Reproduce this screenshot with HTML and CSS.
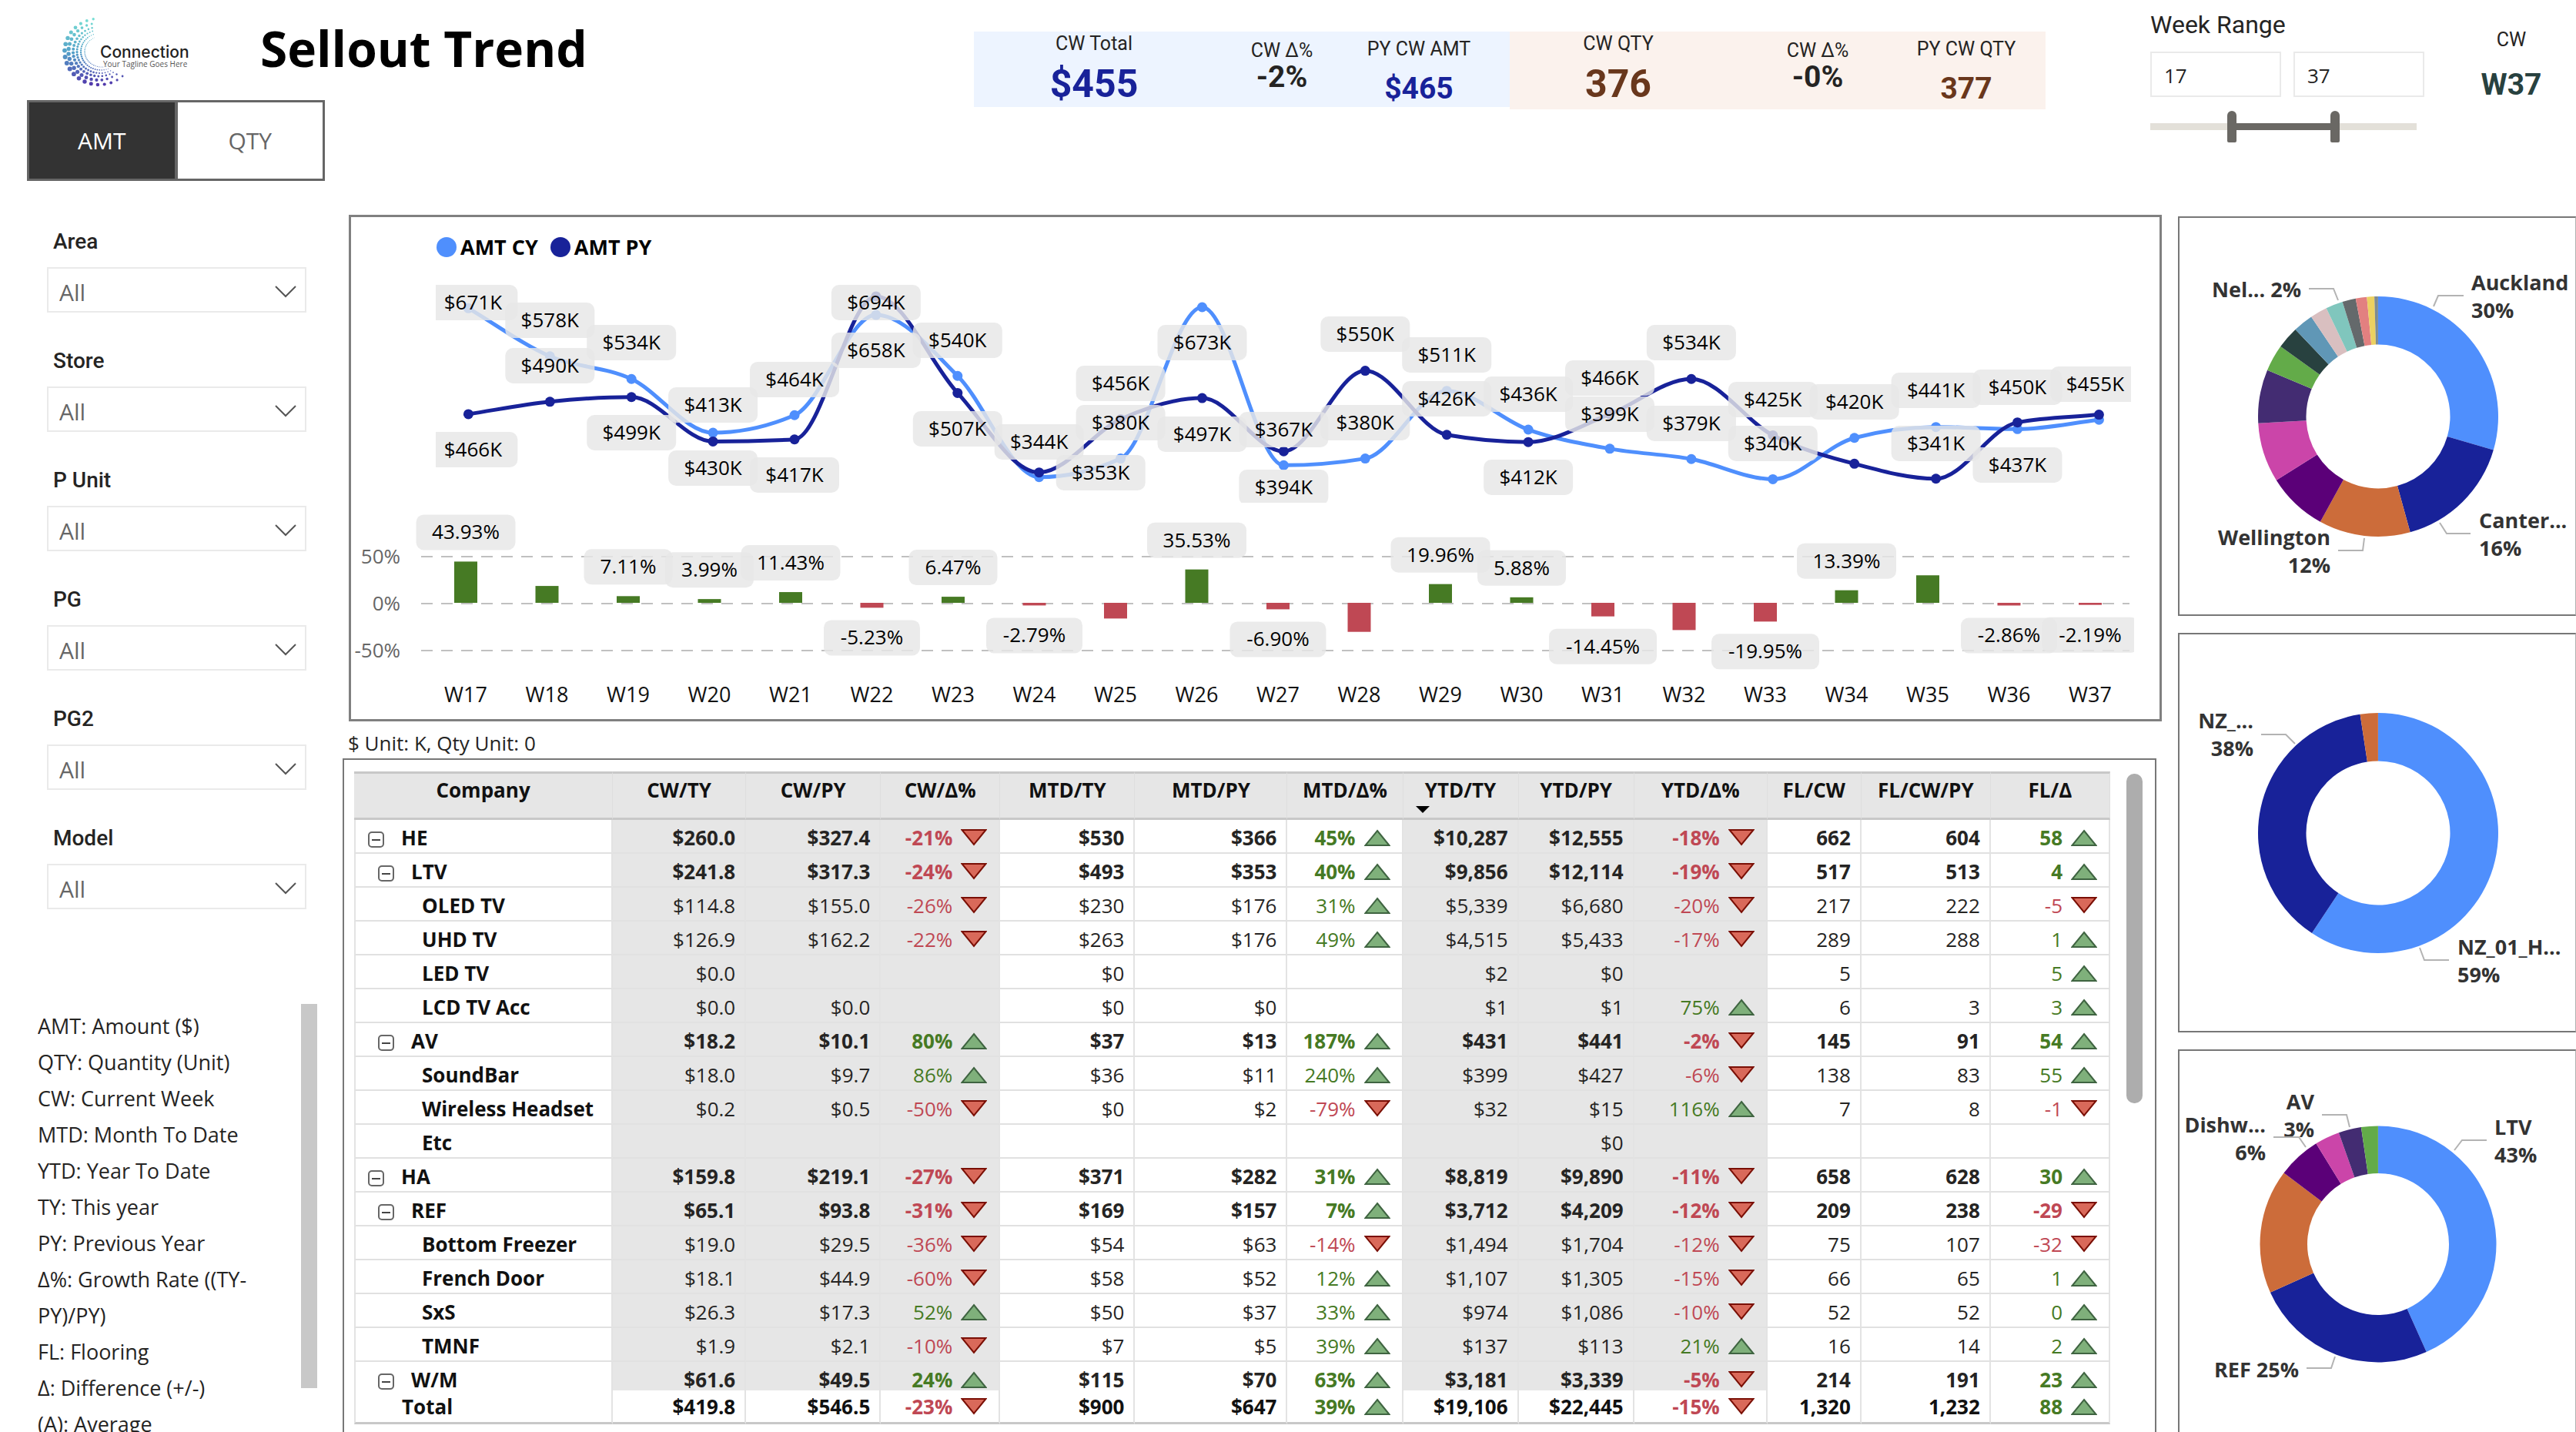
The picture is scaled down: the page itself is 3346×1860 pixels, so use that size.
FILE: index.html
```html
<!DOCTYPE html>
<html lang="en">
<head>
<meta charset="utf-8">
<title>Sellout Trend</title>
<link rel="stylesheet" href="styles.css">
</head>
<body>
<header class="top">
  <div class="brand">
    <div class="brand-row">
      <svg class="logo" viewBox="0 0 170 100" role="img" aria-label="Connection">
        <g id="logo-dots"></g>
        <text class="logo-name" x="52" y="52">Connection</text>
        <text class="logo-tag" x="56" y="64">Your Tagline Goes Here</text>
      </svg>
      <h1 class="title">Sellout Trend</h1>
    </div>
    <div class="toggle">
      <button class="toggle-btn is-on" type="button">AMT</button>
      <button class="toggle-btn" type="button">QTY</button>
    </div>
  </div>
  <section class="kpis">
    <div class="kpi-group kpi-amt">
      <div class="kpi kpi-main"><span class="kpi-label">CW Total</span><strong class="kpi-value">$455</strong></div>
      <div class="kpi kpi-delta"><span class="kpi-label">CW Δ%</span><strong class="kpi-value">-2%</strong></div>
      <div class="kpi kpi-prev"><span class="kpi-label">PY CW AMT</span><strong class="kpi-value">$465</strong></div>
    </div>
    <div class="kpi-group kpi-qty">
      <div class="kpi kpi-main"><span class="kpi-label">CW QTY</span><strong class="kpi-value">376</strong></div>
      <div class="kpi kpi-delta"><span class="kpi-label">CW Δ%</span><strong class="kpi-value">-0%</strong></div>
      <div class="kpi kpi-prev"><span class="kpi-label">PY CW QTY</span><strong class="kpi-value">377</strong></div>
    </div>
  </section>
  <section class="range">
    <h2 class="range-title">Week Range</h2>
    <div class="range-boxes">
      <input class="range-box" type="text" value="17" aria-label="First week">
      <input class="range-box" type="text" value="37" aria-label="Last week">
    </div>
    <div class="slider">
      <div class="slider-fill"></div>
      <input class="slider-input" type="range" min="2" max="52" value="17" aria-label="First week">
      <input class="slider-input" type="range" min="2" max="52" value="37" aria-label="Last week">
    </div>
  </section>
  <div class="week"><span class="week-label">CW</span><strong class="week-value">W37</strong></div>
</header>

<div class="content">
  <aside class="sidebar">
    <div class="filters">
      <div class="filter"><label class="filter-label" for="f-area">Area</label>
        <div class="filter-box"><select class="filter-select" id="f-area"><option>All</option></select><svg class="chevron" viewBox="0 0 28 16"><path d="M1 1l13 13L27 1"/></svg></div></div>
      <div class="filter"><label class="filter-label" for="f-store">Store</label>
        <div class="filter-box"><select class="filter-select" id="f-store"><option>All</option></select><svg class="chevron" viewBox="0 0 28 16"><path d="M1 1l13 13L27 1"/></svg></div></div>
      <div class="filter"><label class="filter-label" for="f-unit">P Unit</label>
        <div class="filter-box"><select class="filter-select" id="f-unit"><option>All</option></select><svg class="chevron" viewBox="0 0 28 16"><path d="M1 1l13 13L27 1"/></svg></div></div>
      <div class="filter"><label class="filter-label" for="f-pg">PG</label>
        <div class="filter-box"><select class="filter-select" id="f-pg"><option>All</option></select><svg class="chevron" viewBox="0 0 28 16"><path d="M1 1l13 13L27 1"/></svg></div></div>
      <div class="filter"><label class="filter-label" for="f-pg2">PG2</label>
        <div class="filter-box"><select class="filter-select" id="f-pg2"><option>All</option></select><svg class="chevron" viewBox="0 0 28 16"><path d="M1 1l13 13L27 1"/></svg></div></div>
      <div class="filter"><label class="filter-label" for="f-model">Model</label>
        <div class="filter-box"><select class="filter-select" id="f-model"><option>All</option></select><svg class="chevron" viewBox="0 0 28 16"><path d="M1 1l13 13L27 1"/></svg></div></div>
    </div>
    <div class="notes">
      <div class="notes-text">
        <p>AMT: Amount ($)</p>
        <p>QTY: Quantity (Unit)</p>
        <p>CW: Current Week</p>
        <p>MTD: Month To Date</p>
        <p>YTD: Year To Date</p>
        <p>TY: This year</p>
        <p>PY: Previous Year</p>
        <p>Δ%: Growth Rate ((TY-PY)/PY)</p>
        <p>FL: Flooring</p>
        <p>Δ: Difference (+/-)</p>
        <p>(A): Average</p>
      </div>
      <div class="notes-thumb"></div>
    </div>
  </aside>

  <main class="main">
    <section class="panel trend">
      <div class="legend">
        <span class="legend-item"><i class="dot dot-cy"></i>AMT CY</span>
        <span class="legend-item"><i class="dot dot-py"></i>AMT PY</span>
      </div>
      <svg class="trend-chart" id="trend" viewBox="0 0 2349 596" role="img" aria-label="Weekly amount, current and previous year"></svg>
    </section>
    <p class="unit">$ Unit: K, Qty Unit: 0</p>
    <section class="matrix">
      <table class="grid">
        <colgroup>
          <col class="c-name"><col class="c-173"><col class="c-175"><col class="c-155">
          <col class="c-175"><col class="c-198"><col class="c-150"><col class="c-150">
          <col class="c-150"><col class="c-173"><col class="c-122"><col class="c-168"><col class="c-155">
        </colgroup>
        <thead><tr>
          <th>Company</th><th>CW/TY</th><th>CW/PY</th><th>CW/Δ%</th><th>MTD/TY</th><th>MTD/PY</th><th>MTD/Δ%</th>
          <th class="sorted">YTD/TY<svg class="sort" viewBox="0 0 18 9"><path d="M0 0h18L9 9z"/></svg></th><th>YTD/PY</th><th>YTD/Δ%</th><th>FL/CW</th><th>FL/CW/PY</th><th>FL/Δ</th>
        </tr></thead>
        <tbody id="rows"></tbody>
      </table>
      <div class="matrix-thumb"></div>
    </section>
  </main>

  <aside class="donuts">
    <section class="panel donut"><svg id="donut-area" class="donut-chart" viewBox="0 0 514 515" role="img" aria-label="Share by area"></svg></section>
    <section class="panel donut"><svg id="donut-store" class="donut-chart" viewBox="0 0 514 515" role="img" aria-label="Share by store"></svg></section>
    <section class="panel donut"><svg id="donut-product" class="donut-chart" viewBox="0 0 514 515" role="img" aria-label="Share by product group"></svg></section>
  </aside>
</div>
<script src="app.js"></script>
</body>
</html>
```
FILE: styles.css
```css
* { box-sizing: border-box; }

body {
  margin: 0;
  height: 100vh;
  overflow: hidden;
  display: flex;
  flex-direction: column;
  background: #fff;
  color: #252423;
  font-family: "Open Sans", "Noto Sans", sans-serif;
  font-size: 26px;
}

h1, h2, p { margin: 0; }
button, input, select { font: inherit; color: inherit; }

/* header */
.top { display: flex; align-items: flex-start; height: 279px; flex: none; }
.brand { flex: 1; }
.brand-row { display: flex; align-items: center; height: 130px; padding: 0 0 4px 78px; }
.logo { width: 170px; height: 100px; margin: 20px 90px 0 0; overflow: visible; }
.logo-name { font-family: Inter, sans-serif; font-size: 21px; font-weight: 500; fill: #222; }
.logo-tag { font-size: 10px; fill: #555; }
.title { font-size: 64px; line-height: 80px; font-weight: 700; color: #000; white-space: nowrap; }
.toggle { display: flex; width: 387px; height: 105px; margin-left: 35px; }
.toggle-btn { flex: 1; border: 3px solid #666; background: #fff; color: #666; font-size: 30px; padding: 0; }
.toggle-btn.is-on { background: #333; color: #fff; border-right-width: 1px; }

.kpis { display: flex; width: 1392px; margin-top: 41px; font-family: Roboto, sans-serif; align-items: flex-start; }
.kpi-group { display: grid; flex: 1; padding-top: 2px; }
.kpi-amt { grid-template-columns: 312px 176px 180px; height: 98px; background: #edf4ff; }
.kpi-qty { grid-template-columns: 282px 236px 150px; height: 101px; background: #fbf2ed; }
.kpi { display: flex; flex-direction: column; align-items: center; white-space: nowrap; }
.kpi-label { font-size: 25px; line-height: 28px; }
.kpi-value { font-size: 39px; line-height: 40px; }
.kpi-delta { padding-top: 9px; }
.kpi-prev { padding-top: 7px; gap: 17px; }
.kpi-main { gap: 10px; }
.kpi-main .kpi-value { font-size: 50px; line-height: 56px; }
.kpi-amt .kpi-main .kpi-value, .kpi-amt .kpi-prev .kpi-value { color: #182299; }
.kpi-qty .kpi-main .kpi-value, .kpi-qty .kpi-prev .kpi-value { color: #69371c; }

.range { width: 356px; margin-left: 136px; padding-top: 12px; }
.range-title { font-family: Roboto, sans-serif; font-size: 32px; line-height: 40px; font-weight: 400; }
.range-boxes { display: grid; grid-template-columns: 1fr 1fr; gap: 16px; margin-top: 15px; }
.range-box { width: 100%; height: 59px; border: 2px solid #eaeaea; padding: 2px 16px 0; background: #fff; }
.slider { position: relative; height: 41px; width: 346px; margin-top: 18px; background: linear-gradient(#e3e0d9, #e3e0d9) center / 100% 9px no-repeat; }
.slider-fill { position: absolute; left: 106px; right: 106px; top: 16px; height: 9px; background: #6a6864; }
.slider-input { position: absolute; inset: 0; width: 100%; height: 41px; margin: 0; background: none; appearance: none; pointer-events: none; }
.slider-input::-webkit-slider-thumb { appearance: none; width: 12px; height: 41px; border-radius: 6px 6px 2px 2px; background: #6a6864; pointer-events: auto; }

.week { display: flex; flex-direction: column; align-items: center; gap: 24px; width: 168px; margin-left: 29px; padding-top: 38px; font-family: Roboto, sans-serif; }
.week-label { font-size: 25px; line-height: 28px; }
.week-value { font-size: 39px; line-height: 40px; color: #28413f; }

/* page body */
.content { flex: 1; min-height: 0; display: grid; grid-template-columns: 445px minmax(0, 1fr) 517px; }

.sidebar { display: flex; flex-direction: column; min-height: 0; padding: 15px 33px 4px 49px; }
.filters { display: flex; flex-direction: column; gap: 43px; padding: 0 14px 0 12px; }
.filter-label { display: block; padding-left: 8px; margin-bottom: 13px; font: 500 28px/40px Roboto, sans-serif; }
.filter-box { display: grid; align-items: center; }
.filter-select { grid-area: 1 / 1; width: 100%; height: 59px; padding: 5px 14px 0; border: 2px solid #eaeaea; border-radius: 0; background: #fff; color: #666; font-size: 30px; appearance: none; }
.chevron { grid-area: 1 / 1; justify-self: end; width: 28px; height: 16px; margin: 5px 13px 0 0; pointer-events: none; }
.chevron path { fill: none; stroke: #555; stroke-width: 2; }
.notes { flex: 1; min-height: 0; margin-top: 123px; display: flex; overflow: hidden; }
.notes-text { flex: 1; padding-top: 5px; font-size: 27px; line-height: 47px; }
.notes-thumb { flex: none; width: 21px; height: 499px; background: #c8c8c8; }

.panel { border: 3px solid #808080; background: #fff; }
.main { padding-right: 21px; }
.trend { margin-left: 8px; }
.legend { display: flex; gap: 16px; height: 56px; padding: 22px 0 0 111px; font-size: 27px; line-height: 34px; font-weight: 700; color: #000; }
.legend-item { display: flex; align-items: center; gap: 5px; }
.dot { width: 26px; height: 26px; border-radius: 50%; }
.dot-cy { background: #4f8ffd; }
.dot-py { background: #182299; }
.trend-chart { display: block; width: 100%; }

.gridline { stroke: #c0c0c0; stroke-width: 2; stroke-dasharray: 15 11; }
.axis { fill: #666; text-anchor: end; }
.week-tick { fill: #111; text-anchor: middle; font-size: 27px; }
.bar-up { fill: #467a24; }
.bar-down { fill: #bf4854; }
.line-cy { fill: none; stroke: #4f8ffd; stroke-width: 5; }
.line-py { fill: none; stroke: #182299; stroke-width: 5; }
.mark-cy { fill: #4f8ffd; }
.mark-py { fill: #182299; }
.tag { fill: #e6e6e6; fill-opacity: .82; }
.tag-text { fill: #000; text-anchor: middle; }

.unit { margin: 0 0 0 7px; padding-top: 9px; line-height: 39px; font-size: 26px; }
.matrix { position: relative; margin-right: 7px; padding: 15px 58px 60px 13px; border: 2px solid #777; }
.matrix-thumb { position: absolute; right: 16px; top: 18px; width: 21px; height: 428px; border-radius: 10px; background: #adadad; }

.grid { width: 100%; table-layout: fixed; border-collapse: separate; border-spacing: 0; white-space: nowrap; }
.c-name { width: 336px; } .c-122 { width: 122px; } .c-150 { width: 150px; } .c-155 { width: 155px; }
.c-168 { width: 168px; } .c-173 { width: 173px; } .c-175 { width: 175px; } .c-198 { width: 198px; }
.grid th, .grid td { padding: 0; }
.grid thead th { height: 63px; padding-bottom: 15px; line-height: 42px; font-weight: 700; color: #111; background: #e6e6e6; border-top: 3px solid #c8c8c8; border-bottom: 3px solid #c8c8c8; border-right: 1px solid #dedede; }
.sorted { position: relative; }
.sort { position: absolute; left: 16px; bottom: 6px; width: 18px; height: 9px; }
.grid tbody th { border-left: 2px solid #e3e3e3; text-align: left; font-weight: 700; color: #111; }
.grid tbody th, .grid tbody td { height: 44px; padding-top: 4px; line-height: 38px; border-right: 2px solid #e3e3e3; border-bottom: 2px solid #e1e1e1; }
.grid tbody td { padding-right: 12px; text-align: right; }
.grid tbody .shade { background: #e6e6e6; }
.grid tbody .name-0 { padding-left: 60px; }
.grid tbody .name-1 { padding-left: 16px; }
.grid tbody .name-2 { padding-left: 29px; }
.grid tbody .name-3 { padding-left: 86px; }
.strong td { font-weight: 700; }
.up { color: #467a24; }
.down { color: #bf4854; }
.tri { width: 34px; height: 22px; margin: 0 3px 0 11px; vertical-align: -1px; }
.tri-up { fill: #7fb07b; stroke: #3f6441; stroke-width: 2; }
.tri-down { fill: #d9695a; stroke: #7a0f05; stroke-width: 2; }
.expander { display: inline-block; width: 21px; height: 21px; margin-right: 22px; padding: 0; vertical-align: -1px; border: 2px solid #666; border-radius: 5px; background: #fff; }
.expander::after { content: ""; display: block; width: 11px; height: 2px; margin: auto; background: #444; }
.grid tbody .cut th, .grid tbody .cut td { height: 37px; padding-top: 9px; line-height: 28px; border-bottom: 0; }
.grid tbody .total th, .grid tbody .total td { height: 44px; padding-top: 2px; line-height: 39px; border-bottom: 3px solid #c8c8c8; background: #fff; color: #111; }
.grid tbody .total .up { color: #467a24; }
.grid tbody .total .down { color: #bf4854; }

.donuts { display: flex; flex-direction: column; gap: 22px; padding-top: 2px; }
.donut { flex: none; border-width: 2px 1px 2px 2px; border-color: #777 #b0b0b0 #777 #777; }
.donut-chart { display: block; width: 100%; }
.donut-text { font-size: 27px; font-weight: 700; fill: #333; }
.end { text-anchor: end; }
.leader { fill: none; stroke: #b3b3b3; stroke-width: 2; }
```
FILE: app.js
```js
const put = (id, markup) => { document.getElementById(id).innerHTML = markup; };

/* ---- logo: rings of dots, opened to the right ---- */
const rings = [[43, 3, 20, 51], [37, 2.7, 21, 50], [32, 2.1, 24, 51], [28, 1.6, 27, 52], [24, 1.2, 29, 53], [20, .8, 28, 54]];
const mix = (a, b, t) => a.map((v, i) => Math.round(v + (b[i] - v) * t));
let dots = "";
rings.forEach(([r, size, n, cx], k) => {
  for (let i = 0; i < n; i++) {
    const t = i / (n - 1);
    const a = (-100 - k * 3 - t * (212 - k * 8)) * Math.PI / 180;
    const x = cx + (r + 2) * Math.cos(a), y = 44 + r * Math.sin(a);
    const s = size * (0.35 + 0.65 * Math.sin(Math.PI * Math.min(1, 0.1 + t * 0.85)));
    const p = y / 90;
    const c = p < .5 ? mix([120, 224, 212], [84, 160, 200], p * 2) : mix([84, 160, 200], [82, 50, 170], p * 2 - 1);
    dots += `<circle cx="${x.toFixed(1)}" cy="${y.toFixed(1)}" r="${s.toFixed(1)}" fill="rgb(${c})"/>`;
  }
});
put("logo-dots", dots);

/* ---- weekly trend ---- */
const cy = [671, 578, 534, 430, 464, 658, 540, 344, 380, 673, 367, 380, 511, 436, 399, 379, 340, 420, 441, 437, 455];
const py = [466, 490, 499, 413, 417, 694, 507, 353, 456, 497, 394, 550, 426, 412, 466, 534, 425, 370, 341, 450, 465];
const growth = [43.93, 17.96, 7.11, 3.99, 11.43, -5.23, 6.47, -2.79, -16.7, 35.53, -6.9, -30.9, 19.96, 5.88, -14.45, -29, -19.95, 13.39, 29.3, -2.86, -2.19];
const quiet = [1, 8, 11, 15, 18];
/* week index, label, top of the label */
const tags = [[0, 671, 32], [0, 466, 223], [1, 578, 55], [1, 490, 114], [2, 534, 84], [2, 499, 201], [3, 413, 165], [3, 430, 247],
  [4, 464, 132], [4, 417, 256], [5, 694, 32], [5, 658, 94], [6, 540, 81], [6, 507, 196], [7, 344, 213], [7, 353, 253],
  [8, 456, 137], [8, 380, 188], [9, 673, 84], [9, 497, 203], [10, 367, 197], [10, 394, 272], [11, 550, 73], [11, 380, 188],
  [12, 511, 100], [12, 426, 157], [13, 436, 151], [13, 412, 259], [14, 466, 130], [14, 399, 177], [15, 534, 84], [15, 379, 189],
  [16, 425, 158], [16, 340, 215], [17, 420, 161], [18, 441, 146], [18, 341, 215], [19, 450, 142], [19, 437, 243], [20, 455, 138]];

const px = i => 152.4 + 105.9 * i;
const bx = i => 149 + 105.5 * i;
const yv = v => 61 + (673 - v) * 0.671;

/* monotone cubic through the points */
function smooth(values) {
  const p = values.map((v, i) => [px(i), yv(v)]);
  const d = p.slice(1).map((q, i) => (q[1] - p[i][1]) / (q[0] - p[i][0]));
  const m = p.map((q, i) => {
    if (i === 0) return d[0];
    if (i === p.length - 1) return d[i - 1];
    const a = d[i - 1], b = d[i];
    return a * b <= 0 ? 0 : Math.sign(a) * Math.min(Math.abs(a), Math.abs(b), Math.abs(a + b) / 4) * 2;
  });
  const h = 105.9 / 3;
  return p.map((q, i) => i === 0 ? `M${q[0]} ${q[1]}` :
    `C${p[i - 1][0] + h} ${p[i - 1][1] + m[i - 1] * h} ${q[0] - h} ${q[1] - m[i] * h} ${q[0]} ${q[1]}`).join("");
}
const marks = (values, cls) => values.map((v, i) => `<circle class="${cls}" cx="${px(i)}" cy="${yv(v)}" r="6.5"/>`).join("");
const tag = (x, top, w, text) => `<rect class="tag" x="${x - w / 2}" y="${top}" width="${w}" height="46" rx="10"/><text class="tag-text" x="${x}" y="${top + 32}">${text}</text>`;

let chart = `<clipPath id="plot"><rect x="110" y="0" width="2202" height="315"/></clipPath><clipPath id="bars"><rect x="0" y="315" width="2316" height="240"/></clipPath>`;
[[385, "50%"], [446, "0%"], [507, "-50%"]].forEach(([y, t]) => {
  chart += `<line class="gridline" x1="91" x2="2310" y1="${y}" y2="${y}"/><text class="axis" x="64" y="${y + 9}">${t}</text>`;
});
chart += growth.map((g, i) => `<rect class="${g > 0 ? "bar-up" : "bar-down"}" x="${bx(i) - 15}" y="${g > 0 ? 445 - g * 1.22 : 445}" width="30" height="${Math.abs(g) * 1.22}"/>` +
  `<text class="week-tick" x="${bx(i)}" y="574">W${17 + i}</text>`).join("");
chart += `<path class="line-cy" d="${smooth(cy)}"/>${marks(cy, "mark-cy")}<path class="line-py" d="${smooth(py)}"/>${marks(py, "mark-py")}`;
chart += `<g clip-path="url(#plot)">` + tags.map(([i, v, top]) => {
  const shift = i === 0 ? 6 : i === 20 ? -5 : v === 353 ? 80 : 0;
  return tag(px(i) + shift, top, 116, `$${v}K`);
}).join("") + `</g><g clip-path="url(#bars)">`;
chart += growth.map((g, i) => {
  if (quiet.includes(i)) return "";
  const t = g.toFixed(2) + "%";
  return tag(bx(i), g > 0 ? 446 - g * 1.22 - 62 : 461 - g * 1.22, { 5: 115, 6: g > 0 ? 129 : 125, 7: 140 }[t.length], t);
}).join("") + `</g>`;
put("trend", chart);

/* ---- donuts ---- */
function donut(id, c, R, r, slices, labels) {
  const pt = (rad, f) => `${(c[0] + rad * Math.sin(f * 2 * Math.PI)).toFixed(2)} ${(c[1] - rad * Math.cos(f * 2 * Math.PI)).toFixed(2)}`;
  let from = 0, out = "";
  slices.forEach(([end, color]) => {
    const a = from / 100, b = Math.min(end, 99.99) / 100, big = b - a > .5 ? 1 : 0;
    out += `<path fill="${color}" d="M${pt(R, a)}A${R} ${R} 0 ${big} 1 ${pt(R, b)}L${pt(r, b)}A${r} ${r} 0 ${big} 0 ${pt(r, a)}Z"/>`;
    from = end;
  });
  labels.forEach(([x, y, lines, side, leader]) => {
    lines.forEach((t, i) => { out += `<text class="donut-text ${side}" x="${x}" y="${y + 36 * i}">${t}</text>`; });
    out += `<polyline class="leader" points="${leader}"/>`;
  });
  put(id, out);
}
donut("donut-area", [258, 258], 156, 93.5,
  [[29.5, "#4f8ffd"], [45.7, "#182299"], [58, "#cc6c3a"], [66.1, "#5b0078"], [74.1, "#cb45a9"], [81.3, "#432c72"], [84.9, "#63ab49"],
   [87.9, "#28413f"], [90.6, "#6097b6"], [92.9, "#d9bfc0"], [95.2, "#80c6bd"], [97, "#64696b"], [98.5, "#e28080"], [99.5, "#ecd161"], [100, "#7f8b90"]],
  [[379, 94, ["Auckland", "30%"], "", "330,115 336,101 369,101"],
   [158, 103, ["Nel... 2%"], "end", "168,92 200,92 206,107"],
   [196, 425, ["Wellington", "12%"], "end", "206,432 238,432 240,416"],
   [389, 403, ["Canter...", "16%"], "", "338,396 347,410 378,410"]]);
donut("donut-store", [258, 258], 156, 93.5,
  [[59.3, "#4f8ffd"], [97.6, "#182299"], [100, "#cc6c3a"]],
  [[96, 122, ["NZ_...", "38%"], "end", "106,130 138,130 150,142"],
   [361, 416, ["NZ_01_H...", "59%"], "", "312,407 318,423 350,423"]]);
donut("donut-product", [258, 251], 153.5, 92,
  [[43.3, "#4f8ffd"], [68.3, "#182299"], [85.3, "#cc6c3a"], [91.2, "#5b0078"], [94.6, "#cb45a9"], [97.7, "#432c72"], [100, "#63ab49"]],
  [[409, 109, ["LTV", "43%"], "", "357,129 367,116 399,116"],
   [175, 76, ["AV", "3%"], "end", "185,83 217,83 221,99"],
   [112, 106, ["Dishw...", "6%"], "end", "122,112 155,112 164,125"],
   [155, 424, ["REF 25%"], "end", "165,412 197,412 202,397"]]);

/* ---- matrix: level | name | values ---- */
const data = `1|HE|$260.0|$327.4|-21%|$530|$366|45%|$10,287|$12,555|-18%|662|604|58
2|LTV|$241.8|$317.3|-24%|$493|$353|40%|$9,856|$12,114|-19%|517|513|4
3|OLED TV|$114.8|$155.0|-26%|$230|$176|31%|$5,339|$6,680|-20%|217|222|-5
3|UHD TV|$126.9|$162.2|-22%|$263|$176|49%|$4,515|$5,433|-17%|289|288|1
3|LED TV|$0.0|||$0|||$2|$0||5||5
3|LCD TV Acc|$0.0|$0.0||$0|$0||$1|$1|75%|6|3|3
2|AV|$18.2|$10.1|80%|$37|$13|187%|$431|$441|-2%|145|91|54
3|SoundBar|$18.0|$9.7|86%|$36|$11|240%|$399|$427|-6%|138|83|55
3|Wireless Headset|$0.2|$0.5|-50%|$0|$2|-79%|$32|$15|116%|7|8|-1
3|Etc||||||||$0||||
1|HA|$159.8|$219.1|-27%|$371|$282|31%|$8,819|$9,890|-11%|658|628|30
2|REF|$65.1|$93.8|-31%|$169|$157|7%|$3,712|$4,209|-12%|209|238|-29
3|Bottom Freezer|$19.0|$29.5|-36%|$54|$63|-14%|$1,494|$1,704|-12%|75|107|-32
3|French Door|$18.1|$44.9|-60%|$58|$52|12%|$1,107|$1,305|-15%|66|65|1
3|SxS|$26.3|$17.3|52%|$50|$37|33%|$974|$1,086|-10%|52|52|0
3|TMNF|$1.9|$2.1|-10%|$7|$5|39%|$137|$113|21%|16|14|2
2|W/M|$61.6|$49.5|24%|$115|$70|63%|$3,181|$3,339|-5%|214|191|23
0|Total|$419.8|$546.5|-23%|$900|$647|39%|$19,106|$22,445|-15%|1,320|1,232|88`.split("\n").map(l => l.split("|"));

const tri = up => `<svg class="tri" viewBox="0 0 34 22"><path class="${up ? "tri-up" : "tri-down"}" d="${up ? "M17 2L32.500 21H1.500z" : "M1.500 1H32.500L17 20z"}"/></svg>`;
put("rows", data.map(([level, name, ...cells]) => {
  const cls = [level < 3 ? "strong" : "", name === "W/M" ? "cut" : "", level === "0" ? "total" : ""].join(" ").trim();
  const box = level === "1" || level === "2" ? `<button class="expander" type="button" aria-label="Collapse ${name}"></button>` : "";
  return `<tr class="${cls}"><th scope="row" class="name-${level}">${box}${name}</th>` + cells.map((v, i) => {
    const delta = [2, 5, 8, 11].includes(i) && v !== "";
    const up = !v.startsWith("-");
    const shade = i < 3 || (i > 5 && i < 9) ? "shade " : "";
    return `<td class="${shade}${delta ? (up ? "up" : "down") : ""}">${v}${delta ? tri(up) : ""}</td>`;
  }).join("") + "</tr>";
}).join(""));
```
